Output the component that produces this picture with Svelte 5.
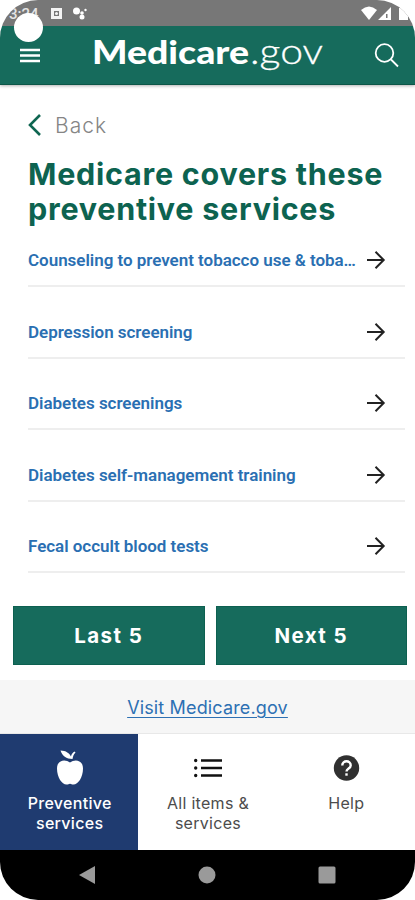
<script>
  let services = [
    'Counseling to prevent tobacco use & toba…',
    'Depression screening',
    'Diabetes screenings',
    'Diabetes self-management training',
    'Fecal occult blood tests'
  ]
</script>

<div class="phone">
  <div class="status">
    <span class="time">3:24</span>
    <svg class="notes" width="38" height="14" viewBox="0 0 38 14">
      <path d="M0 2h11v11H0zM3 5v5h5V5z" fill="#f4f4f4" fill-rule="evenodd" />
      <circle cx="5.500" cy="7.500" r="1.500" fill="#f4f4f4" />
      <circle cx="25.500" cy="5" r="3.500" fill="#fff" />
      <circle cx="31" cy="7" r="1.800" fill="#fff" />
      <circle cx="31" cy="11" r="2.500" fill="#fff" />
      <circle cx="34.500" cy="4" r="1.200" fill="#fff" />
    </svg>
    <svg class="signal" width="55" height="16" viewBox="0 0 55 16">
      <path d="M0 4Q8-3 16 4L8 14z" fill="#fff" />
      <path d="M17 14L30 1v13zM25 8v4h1.500V8z" fill="#fff" fill-rule="evenodd" />
      <path d="M38 2h2V0h5v2h2v12h-9z" fill="#fff" />
    </svg>
    <span class="camera"></span>
  </div>

  <header>
    <svg width="22" height="18" viewBox="0 0 22 18" stroke="#fff" stroke-width="2.500">
      <path d="M1 4h20M1 9.500h20M1 15h20" />
    </svg>
    <svg class="logo" width="232" height="50" viewBox="0 0 232 50" fill="#fff">
      <text class="name" x="-1" y="34" textLength="157" lengthAdjust="spacingAndGlyphs">Medicare</text>
      <text class="gov" x="157" y="34" textLength="73" lengthAdjust="spacingAndGlyphs">.gov</text>
    </svg>
    <svg width="26" height="26" viewBox="0 0 26 26" fill="none" stroke="#fff" stroke-width="1.800">
      <circle cx="10.500" cy="11" r="8.800" />
      <path d="M17 17.500l7 7" />
    </svg>
  </header>

  <main>
    <div class="back">
      <svg width="14" height="24" viewBox="0 0 14 24" fill="none" stroke="#0f6651" stroke-width="2.600">
        <path d="M12 2L2 12l10 10" />
      </svg>
      <span>Back</span>
    </div>
    <h1>Medicare covers these<br>preventive services</h1>
    <ul>
      {#each services as service}
        <li>
          <span>{service}</span>
          <svg width="20" height="20" viewBox="0 0 20 20" fill="none" stroke="#222" stroke-width="2">
            <path d="M1 10h17M9.500 1.800l8.200 8.200-8.200 8.200" />
          </svg>
        </li>
      {/each}
    </ul>
    <div class="pager">
      <button>Last 5</button>
      <button>Next 5</button>
    </div>
  </main>

  <div class="visit"><a href="#visit">Visit Medicare.gov</a></div>

  <nav>
    <div class="tab active">
      <svg width="28" height="36" viewBox="0 0 28 36" fill="#fff">
        <path d="M14 13.500C9 9.500 1 11 1 19.500c0 9 5 16 9.500 16 2 0 2-.8 3.500-.8s1.500.8 3.500.8c4.500 0 9.500-7 9.500-16 0-8.500-8-10-13-6z" />
        <path d="M4.500 1.500c5.500 0 9 3 10.500 6 .3-2 1.500-4 3.500-5l1 1c-2 2-2.500 4-3 6.500-6 0-10.500-3.500-12-8.500z" />
      </svg>
      <span>Preventive<br>services</span>
    </div>
    <div class="tab items">
      <svg width="28" height="36" viewBox="0 0 28 36" fill="none" stroke="#111" stroke-width="2.600">
        <path d="M7 11.500h21M7 19h21M7 26.500h21" />
        <path d="M1.700 11.500h.01M1.700 19h.01M1.700 26.500h.01" stroke-width="3.400" stroke-linecap="round" />
      </svg>
      <span>All items &amp;<br>services</span>
    </div>
    <div class="tab help">
      <svg width="28" height="36" viewBox="0 0 28 36" fill="none">
        <circle cx="14.500" cy="19" r="12.700" fill="#303030" />
        <path d="M10.300 16.500c0-5.600 8.400-5.600 8.400 0 0 3-4.200 3-4.200 6" stroke="#fff" stroke-width="2.400" />
        <path d="M13.300 24.300h2.400v2.400h-2.400z" fill="#fff" />
      </svg>
      <span>Help</span>
    </div>
  </nav>

  <div class="system">
    <svg width="17" height="18" viewBox="0 0 17 18"><path d="M0 9L16 0v18z" /></svg>
    <svg width="18" height="18" viewBox="0 0 18 18"><circle cx="9" cy="9" r="8.500" /></svg>
    <svg width="18" height="18" viewBox="0 0 18 18"><rect x=".5" y=".5" width="17" height="17" rx="1.500" /></svg>
  </div>
</div>

<style>
  :global(body) {
    background: #fff;
  }
  .phone {
    width: 415px;
    height: 900px;
    display: flex;
    flex-direction: column;
    overflow: hidden;
    border-radius: 38px;
    background: #fff;
    font-family: Inter, "Open Sans", sans-serif;
  }
  svg {
    display: block;
    flex: none;
  }
  .status {
    position: relative;
    height: 26px;
    flex: none;
    box-sizing: border-box;
    padding: 6px 0 0 9px;
    display: flex;
    background: #777;
  }
  .time {
    width: 42px;
    font: 500 15px/16px Roboto, sans-serif;
    color: #e4e4e4;
  }
  .signal {
    margin-left: auto;
    margin-right: -1px;
  }
  .camera {
    position: absolute;
    left: 14px;
    top: 13px;
    width: 29px;
    height: 29px;
    border-radius: 50%;
    background: #fff;
  }
  header {
    height: 59px;
    flex: none;
    box-sizing: border-box;
    padding: 0 15px 0 19px;
    display: flex;
    align-items: center;
    background: #166b5c;
    border-bottom: 1px solid #0d5748;
    box-shadow: 0 1px 3px rgba(0, 0, 0, .3);
  }
  .logo {
    margin: 0 auto 0 52px;
    overflow: visible;
    font-family: Lato, sans-serif;
  }
  .name {
    font-size: 33px;
    font-weight: 900;
  }
  .gov {
    font-size: 36px;
    font-weight: 300;
    stroke: #fff;
    stroke-width: .3px;
  }
  main {
    height: 595px;
    flex: none;
    display: flex;
    flex-direction: column;
  }
  .back {
    display: flex;
    align-items: center;
    gap: 13px;
    height: 24px;
    padding: 28px 0 0 28px;
    font-size: 21px;
    font-weight: 300;
    letter-spacing: 1px;
    color: #858585;
  }
  h1 {
    margin: 19px 0 0 28px;
    font-size: 30.500px;
    line-height: 35px;
    font-weight: 700;
    letter-spacing: .75px;
    color: #0d6350;
    white-space: nowrap;
  }
  ul {
    list-style: none;
    margin: 7px 10px 0 28px;
    padding: 0;
  }
  li {
    height: 71.5px;
    box-sizing: border-box;
    padding: 0 19px 15px 0;
    display: flex;
    align-items: flex-end;
    justify-content: space-between;
    border-bottom: 2px solid #eee;
  }
  li:first-child {
    height: 54px;
  }
  li span {
    white-space: nowrap;
    font: 600 17px/20px Roboto, sans-serif;
    letter-spacing: -.03px;
    color: #2a6fb2;
  }
  .pager {
    display: flex;
    gap: 11px;
    margin: auto 8px 15px 13px;
  }
  button {
    flex: 1;
    height: 59px;
    border: 1px solid #0d6050;
    background: #166b5c;
    color: #fff;
    font: 700 20.500px/24px Inter, sans-serif;
    letter-spacing: 1.4px;
  }
  .visit {
    height: 54px;
    flex: none;
    box-sizing: border-box;
    padding-top: 2px;
    display: flex;
    align-items: center;
    justify-content: center;
    background: #f6f6f6;
    border-bottom: 1px solid #e8e8e8;
  }
  a {
    font-size: 18px;
    letter-spacing: .15px;
    color: #2d70b3;
    text-underline-offset: 3px;
  }
  nav {
    height: 116px;
    flex: none;
    display: flex;
  }
  .tab {
    flex: 1;
    display: flex;
    flex-direction: column;
    align-items: center;
    padding: 15px 0 0 1px;
    gap: 8px;
    text-align: center;
    font-size: 16px;
    line-height: 20px;
    letter-spacing: .3px;
    color: #4c4c4c;
  }
  .active {
    background: #1f3b70;
    color: #fff;
    font-weight: 500;
  }
  .system {
    flex: 1;
    display: flex;
    justify-content: space-between;
    align-items: center;
    padding: 0 79px;
    background: #000;
    fill: #9a9a9a;
  }
</style>
